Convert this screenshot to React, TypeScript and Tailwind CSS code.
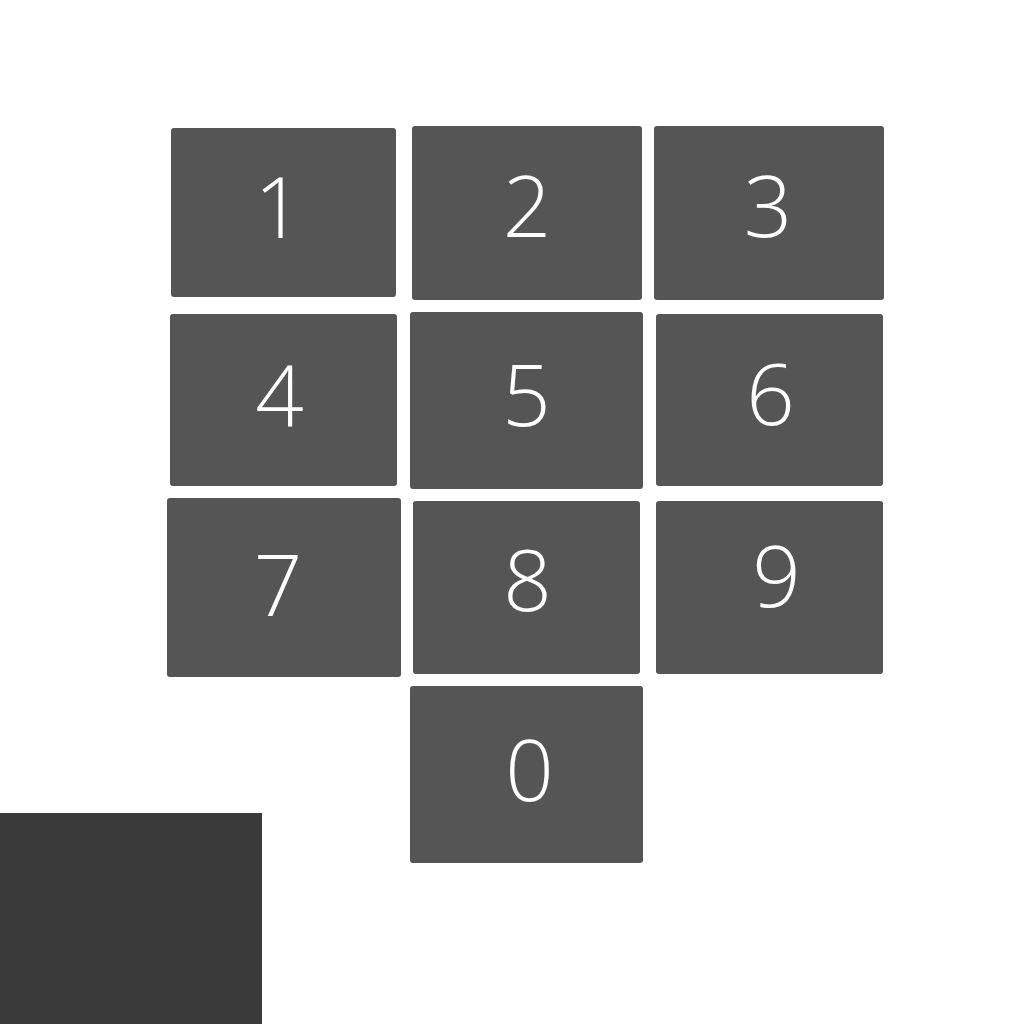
import React from "react";

type KeyProps = {
  label: string;
  box: string;
  digit: string;
};

function Key({ label, box, digit }: KeyProps) {
  return (
    <div className={`flex shrink-0 items-center justify-center rounded-[3px] bg-[#555555] ${box}`}>
      <span className={`block text-[85px] font-light leading-none text-white ${digit}`}>{label}</span>
    </div>
  );
}

export default function App() {
  return (
    <div
      className="flex h-[1024px] w-[1024px] flex-col overflow-hidden bg-white"
      style={{ fontFamily: '"Open Sans", "Noto Sans", sans-serif' }}
    >
      <div className="mt-[126px] flex items-start">
        <Key label="1" box="ml-[171px] mt-[2px] h-[169px] w-[225px]" digit="-translate-x-[5px] -translate-y-[7px]" />
        <Key label="2" box="ml-[16px] h-[174px] w-[230px]" digit="-translate-y-[9px]" />
        <Key label="3" box="ml-[12px] h-[174px] w-[230px]" digit="-translate-x-[1px] -translate-y-[9px]" />
      </div>
      <div className="mt-[12px] flex items-start">
        <Key label="4" box="ml-[170px] mt-[2px] h-[172px] w-[227px]" digit="-translate-x-[4px] -translate-y-[7px]" />
        <Key label="5" box="ml-[13px] h-[177px] w-[233px]" digit="-translate-y-[7px]" />
        <Key label="6" box="ml-[13px] mt-[2px] h-[172px] w-[227px]" digit="translate-x-[1px] -translate-y-[8px]" />
      </div>
      <div className="mt-[9px] flex items-start">
        <Key label="7" box="ml-[167px] h-[179px] w-[234px]" digit="-translate-x-[6px] -translate-y-[4px]" />
        <Key label="8" box="ml-[12px] mt-[3px] h-[173px] w-[227px]" digit="translate-x-[1px] -translate-y-[9px]" />
        <Key label="9" box="ml-[16px] mt-[3px] h-[173px] w-[227px]" digit="translate-x-[7px] -translate-y-[13px]" />
      </div>
      <div className="mt-[9px] flex items-start">
        <div className="mt-[127px] h-[211px] w-[262px] shrink-0 bg-[#3a3a3a]" />
        <Key label="0" box="ml-[148px] h-[177px] w-[233px]" digit="translate-x-[3px] -translate-y-[6px]" />
      </div>
    </div>
  );
}
